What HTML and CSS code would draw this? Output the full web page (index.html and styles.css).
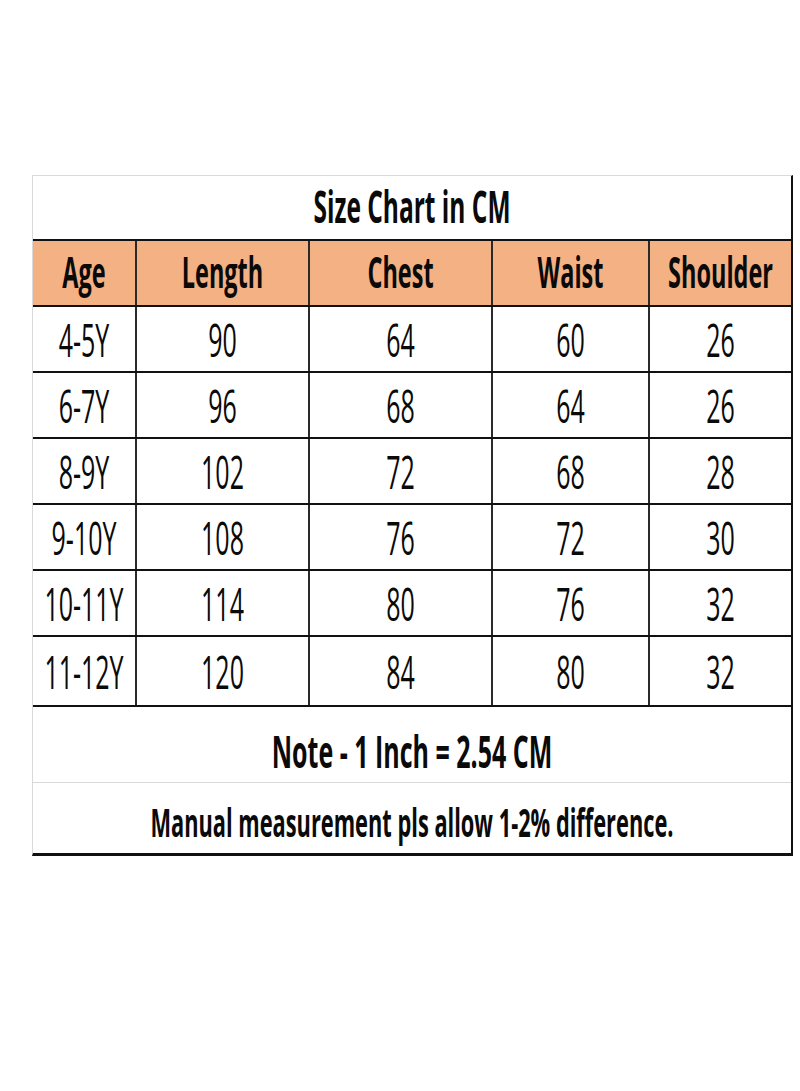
FILE: index.html
```html
<!DOCTYPE html>
<html>
<head>
<meta charset="utf-8">
<link rel="stylesheet" href="styles.css">
</head>
<body>
<div class="chart">
  <div class="row title"><div class="cell span"><span class="t">Size Chart in CM</span></div></div>
  <div class="row head">
    <div class="cell"><span class="t">Age</span></div>
    <div class="cell"><span class="t">Length</span></div>
    <div class="cell"><span class="t">Chest</span></div>
    <div class="cell"><span class="t">Waist</span></div>
    <div class="cell"><span class="t">Shoulder</span></div>
  </div>
  <div class="row data">
    <div class="cell"><span class="t">4-5Y</span></div>
    <div class="cell"><span class="t">90</span></div>
    <div class="cell"><span class="t">64</span></div>
    <div class="cell"><span class="t">60</span></div>
    <div class="cell"><span class="t">26</span></div>
  </div>
  <div class="row data">
    <div class="cell"><span class="t">6-7Y</span></div>
    <div class="cell"><span class="t">96</span></div>
    <div class="cell"><span class="t">68</span></div>
    <div class="cell"><span class="t">64</span></div>
    <div class="cell"><span class="t">26</span></div>
  </div>
  <div class="row data">
    <div class="cell"><span class="t">8-9Y</span></div>
    <div class="cell"><span class="t">102</span></div>
    <div class="cell"><span class="t">72</span></div>
    <div class="cell"><span class="t">68</span></div>
    <div class="cell"><span class="t">28</span></div>
  </div>
  <div class="row data">
    <div class="cell"><span class="t">9-10Y</span></div>
    <div class="cell"><span class="t">108</span></div>
    <div class="cell"><span class="t">76</span></div>
    <div class="cell"><span class="t">72</span></div>
    <div class="cell"><span class="t">30</span></div>
  </div>
  <div class="row data">
    <div class="cell"><span class="t">10-11Y</span></div>
    <div class="cell"><span class="t">114</span></div>
    <div class="cell"><span class="t">80</span></div>
    <div class="cell"><span class="t">76</span></div>
    <div class="cell"><span class="t">32</span></div>
  </div>
  <div class="row data last">
    <div class="cell"><span class="t">11-12Y</span></div>
    <div class="cell"><span class="t">120</span></div>
    <div class="cell"><span class="t">84</span></div>
    <div class="cell"><span class="t">80</span></div>
    <div class="cell"><span class="t">32</span></div>
  </div>
  <div class="row note"><div class="cell span"><span class="t">Note - 1 Inch = 2.54 CM</span></div></div>
  <div class="row manual"><div class="cell span"><span class="t">Manual measurement pls allow 1-2% difference.</span></div></div>
</div>
</body>
</html>
```

FILE: styles.css
```css
html, body {
  margin: 0;
  padding: 0;
  background: #ffffff;
}

body {
  font-family: "Open Sans", "DejaVu Sans", sans-serif;
  color: #0a0a0a;
}

.chart {
  box-sizing: border-box;
  width: 761px;
  margin: 175px 0 0 32px;
  border-left: 1px solid #d9d9d9;
  border-top: 1px solid #d9d9d9;
  border-right: 2px solid #111;
  border-bottom: 3px solid #111;
}

.row {
  display: grid;
  grid-template-columns: 104px 173px 183px 157px 141px;
  box-sizing: border-box;
  border-bottom: 2px solid #111;
}

.cell {
  box-sizing: border-box;
  display: flex;
  align-items: center;
  justify-content: center;
  border-right: 2px solid #2a2a2a;
  line-height: 1;
  white-space: nowrap;
}

.cell:last-child {
  border-right: none;
}

.cell.span {
  grid-column: 1 / -1;
}

.t {
  display: inline-block;
  transform: scaleY(1.8);
}

.title {
  height: 65px;
}

.title .t {
  font-size: 24.5px;
  font-weight: 700;
}

.head {
  height: 66px;
  background: #f4b183;
}

.head .t {
  font-size: 23.5px;
  font-weight: 700;
}

.data {
  height: 66px;
}

.data.last {
  height: 70px;
}

.data .t {
  font-size: 25px;
  font-weight: 400;
}

.note {
  height: 76px;
  border-bottom: 1px solid #d9d9d9;
}

.note .cell {
  padding-top: 12px;
}

.note .t {
  font-size: 25px;
  font-weight: 700;
}

.manual {
  height: 70px;
  border-bottom: none;
}

.manual .cell {
  padding-top: 9px;
}

.manual .t {
  font-size: 21.8px;
  font-weight: 700;
}
```
